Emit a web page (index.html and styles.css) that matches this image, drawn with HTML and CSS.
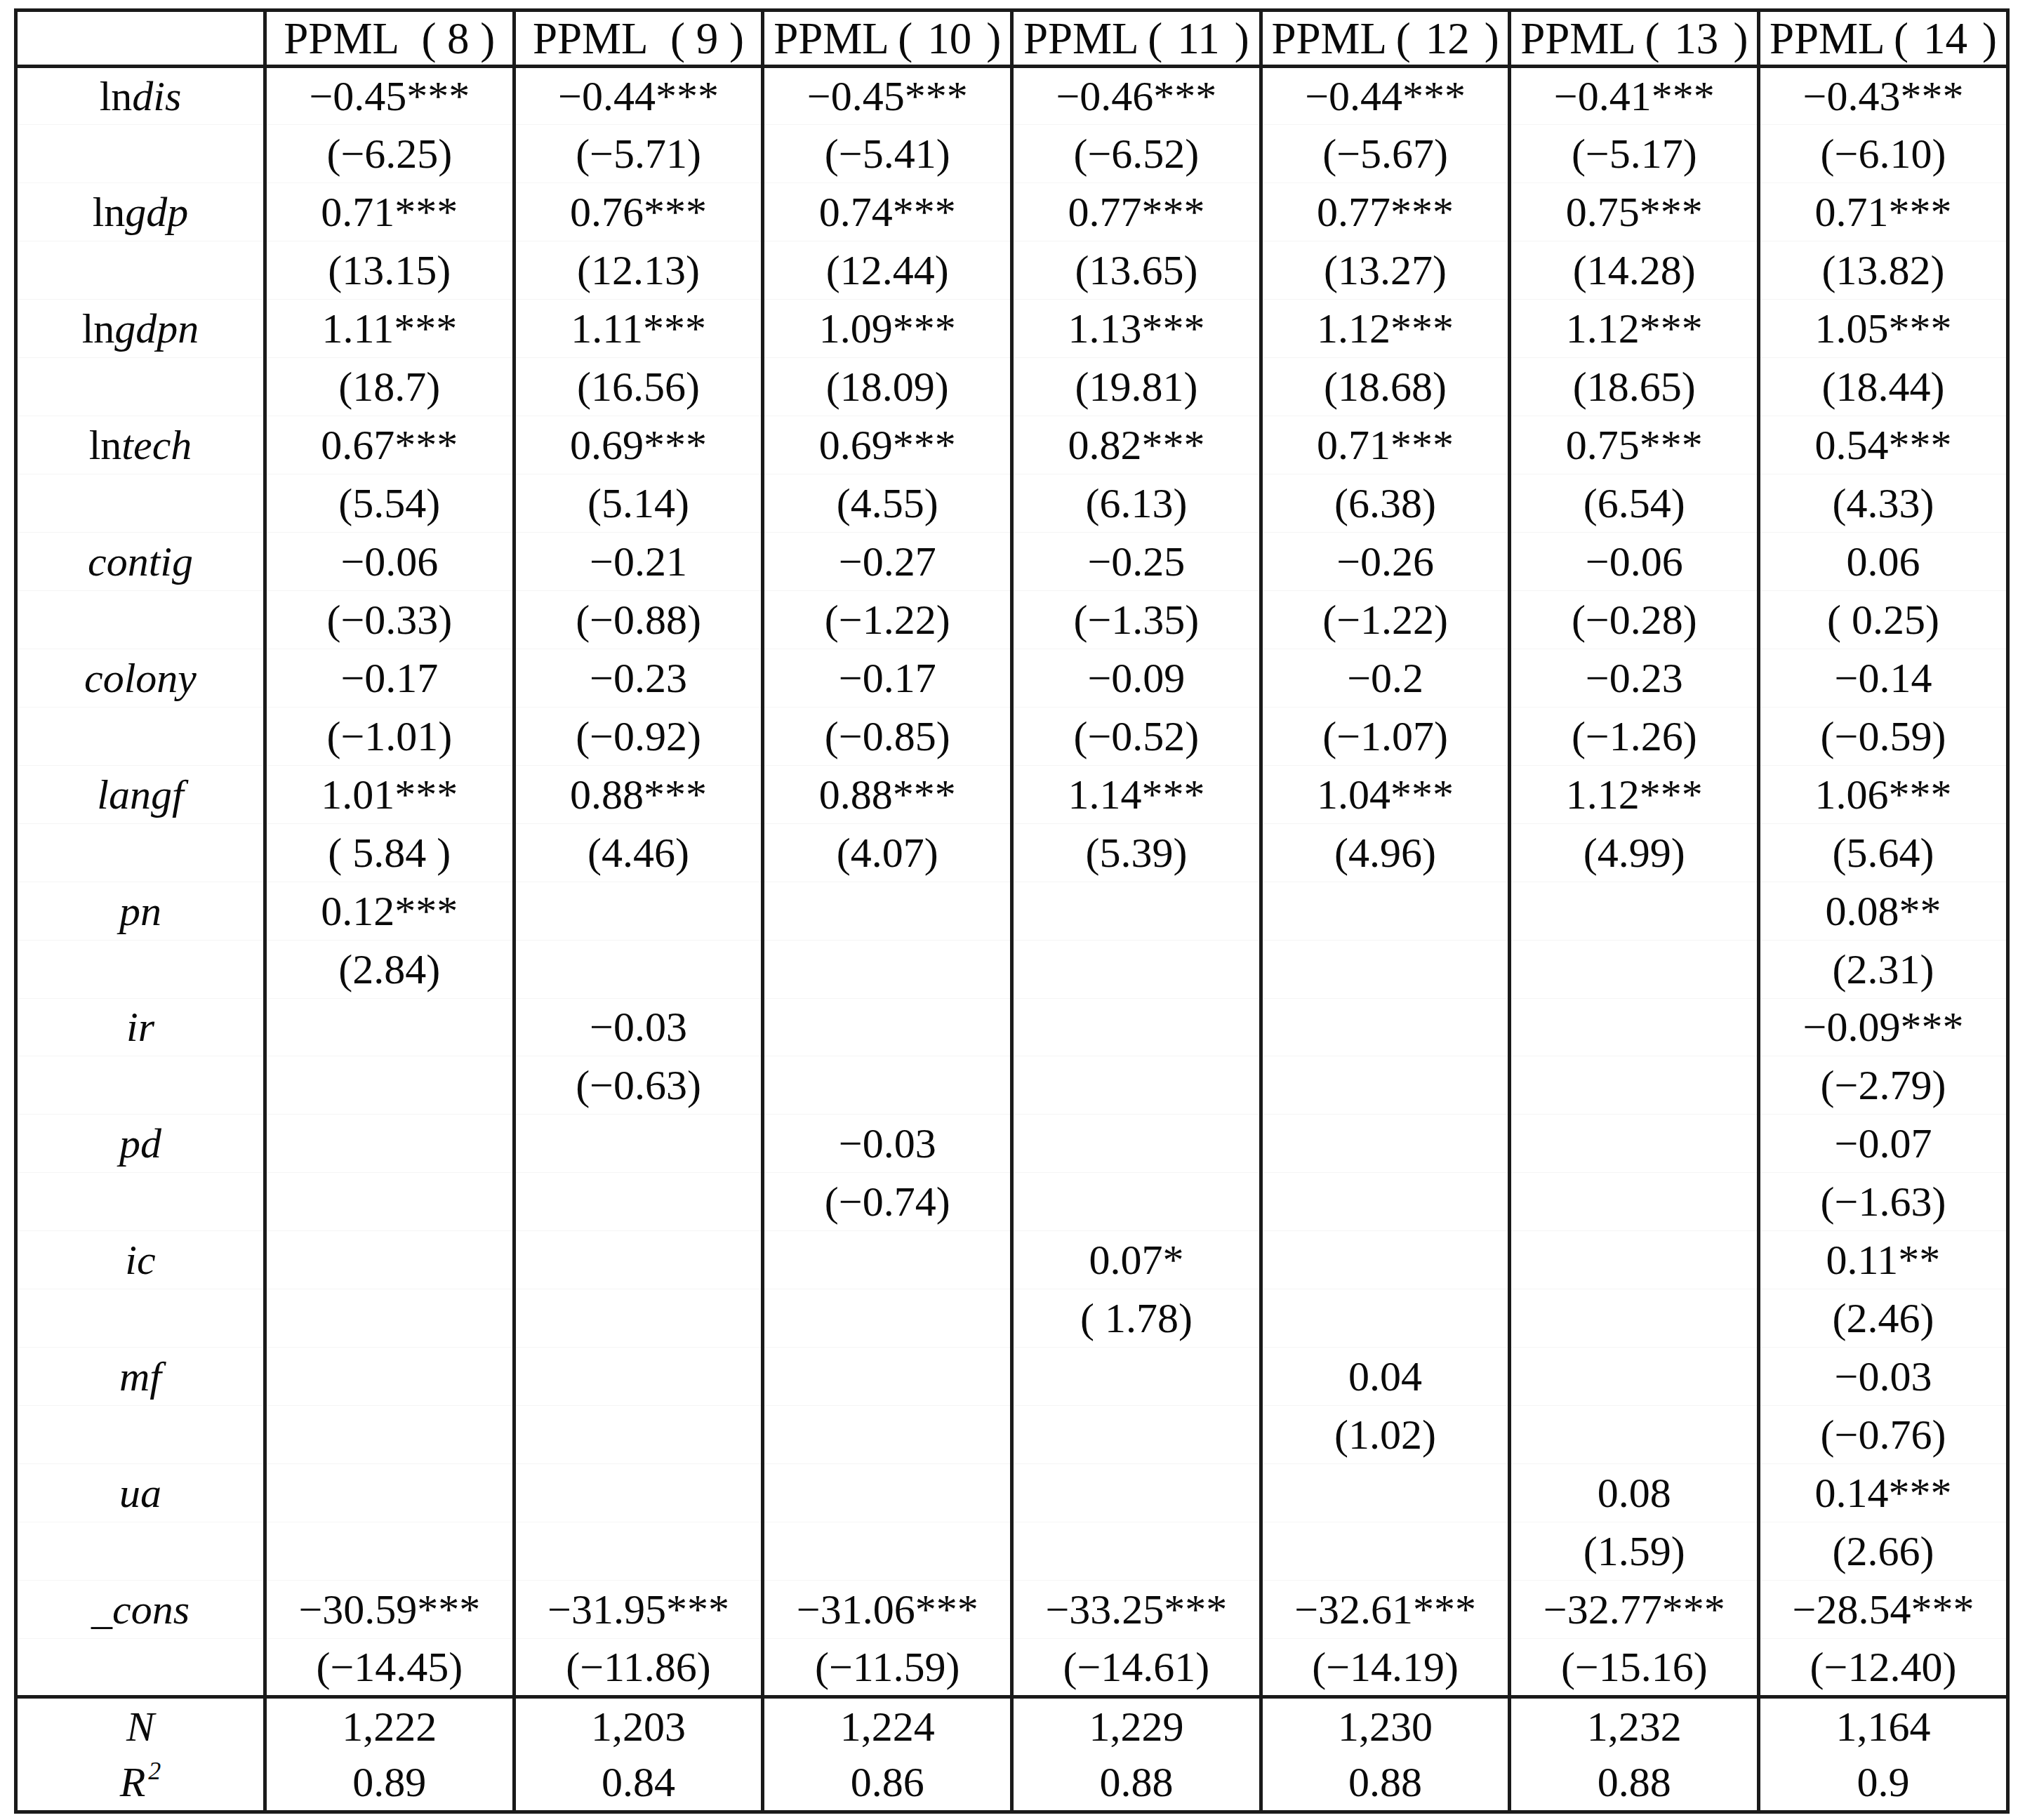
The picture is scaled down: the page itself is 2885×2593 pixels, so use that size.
FILE: index.html
```html
<!DOCTYPE html>
<html lang="zh">
<head>
<meta charset="utf-8">
<title>PPML</title>
<link rel="stylesheet" href="styles.css">
</head>
<body>
<table class="reg">
<colgroup><col class="c-lab"><col class="c-val"><col class="c-val"><col class="c-val"><col class="c-val"><col class="c-val"><col class="c-val"><col class="c-val"></colgroup>
<thead>
<tr class="head">
<th></th>
<th>PPML&#8194;( 8 )</th>
<th>PPML&#8194;( 9 )</th>
<th>PPML&#8201;(&#8196;10&#8196;)</th>
<th>PPML&#8201;(&#8196;11&#8196;)</th>
<th>PPML&#8201;(&#8196;12&#8196;)</th>
<th>PPML&#8201;(&#8196;13&#8196;)</th>
<th>PPML&#8201;(&#8196;14&#8196;)</th>
</tr>
</thead>
<tbody class="body">
<tr class="coef"><td>ln<i>dis</i></td><td>−0.45***</td><td>−0.44***</td><td>−0.45***</td><td>−0.46***</td><td>−0.44***</td><td>−0.41***</td><td>−0.43***</td></tr>
<tr class="tst"><td></td><td>(−6.25)</td><td>(−5.71)</td><td>(−5.41)</td><td>(−6.52)</td><td>(−5.67)</td><td>(−5.17)</td><td>(−6.10)</td></tr>
<tr class="coef"><td>ln<i>gdp</i></td><td>0.71***</td><td>0.76***</td><td>0.74***</td><td>0.77***</td><td>0.77***</td><td>0.75***</td><td>0.71***</td></tr>
<tr class="tst"><td></td><td>(13.15)</td><td>(12.13)</td><td>(12.44)</td><td>(13.65)</td><td>(13.27)</td><td>(14.28)</td><td>(13.82)</td></tr>
<tr class="coef"><td>ln<i>gdpn</i></td><td>1.11***</td><td>1.11***</td><td>1.09***</td><td>1.13***</td><td>1.12***</td><td>1.12***</td><td>1.05***</td></tr>
<tr class="tst"><td></td><td>(18.7)</td><td>(16.56)</td><td>(18.09)</td><td>(19.81)</td><td>(18.68)</td><td>(18.65)</td><td>(18.44)</td></tr>
<tr class="coef"><td>ln<i>tech</i></td><td>0.67***</td><td>0.69***</td><td>0.69***</td><td>0.82***</td><td>0.71***</td><td>0.75***</td><td>0.54***</td></tr>
<tr class="tst"><td></td><td>(5.54)</td><td>(5.14)</td><td>(4.55)</td><td>(6.13)</td><td>(6.38)</td><td>(6.54)</td><td>(4.33)</td></tr>
<tr class="coef"><td><i>contig</i></td><td>−0.06</td><td>−0.21</td><td>−0.27</td><td>−0.25</td><td>−0.26</td><td>−0.06</td><td>0.06</td></tr>
<tr class="tst"><td></td><td>(−0.33)</td><td>(−0.88)</td><td>(−1.22)</td><td>(−1.35)</td><td>(−1.22)</td><td>(−0.28)</td><td>( 0.25)</td></tr>
<tr class="coef"><td><i>colony</i></td><td>−0.17</td><td>−0.23</td><td>−0.17</td><td>−0.09</td><td>−0.2</td><td>−0.23</td><td>−0.14</td></tr>
<tr class="tst"><td></td><td>(−1.01)</td><td>(−0.92)</td><td>(−0.85)</td><td>(−0.52)</td><td>(−1.07)</td><td>(−1.26)</td><td>(−0.59)</td></tr>
<tr class="coef"><td><i>langf</i></td><td>1.01***</td><td>0.88***</td><td>0.88***</td><td>1.14***</td><td>1.04***</td><td>1.12***</td><td>1.06***</td></tr>
<tr class="tst"><td></td><td>( 5.84 )</td><td>(4.46)</td><td>(4.07)</td><td>(5.39)</td><td>(4.96)</td><td>(4.99)</td><td>(5.64)</td></tr>
<tr class="coef"><td><i>pn</i></td><td>0.12***</td><td></td><td></td><td></td><td></td><td></td><td>0.08**</td></tr>
<tr class="tst"><td></td><td>(2.84)</td><td></td><td></td><td></td><td></td><td></td><td>(2.31)</td></tr>
<tr class="coef"><td><i>ir</i></td><td></td><td>−0.03</td><td></td><td></td><td></td><td></td><td>−0.09***</td></tr>
<tr class="tst"><td></td><td></td><td>(−0.63)</td><td></td><td></td><td></td><td></td><td>(−2.79)</td></tr>
<tr class="coef"><td><i>pd</i></td><td></td><td></td><td>−0.03</td><td></td><td></td><td></td><td>−0.07</td></tr>
<tr class="tst"><td></td><td></td><td></td><td>(−0.74)</td><td></td><td></td><td></td><td>(−1.63)</td></tr>
<tr class="coef"><td><i>ic</i></td><td></td><td></td><td></td><td>0.07*</td><td></td><td></td><td>0.11**</td></tr>
<tr class="tst"><td></td><td></td><td></td><td></td><td>( 1.78)</td><td></td><td></td><td>(2.46)</td></tr>
<tr class="coef"><td><i>mf</i></td><td></td><td></td><td></td><td></td><td>0.04</td><td></td><td>−0.03</td></tr>
<tr class="tst"><td></td><td></td><td></td><td></td><td></td><td>(1.02)</td><td></td><td>(−0.76)</td></tr>
<tr class="coef"><td><i>ua</i></td><td></td><td></td><td></td><td></td><td></td><td>0.08</td><td>0.14***</td></tr>
<tr class="tst"><td></td><td></td><td></td><td></td><td></td><td></td><td>(1.59)</td><td>(2.66)</td></tr>
<tr class="coef"><td><i>_cons</i></td><td>−30.59***</td><td>−31.95***</td><td>−31.06***</td><td>−33.25***</td><td>−32.61***</td><td>−32.77***</td><td>−28.54***</td></tr>
<tr class="tst"><td></td><td>(−14.45)</td><td>(−11.86)</td><td>(−11.59)</td><td>(−14.61)</td><td>(−14.19)</td><td>(−15.16)</td><td>(−12.40)</td></tr>
</tbody>
<tfoot class="foot">
<tr class="stat"><td><i>N</i></td><td>1,222</td><td>1,203</td><td>1,224</td><td>1,229</td><td>1,230</td><td>1,232</td><td>1,164</td></tr>
<tr class="stat"><td><i>R</i><sup class="sq">2</sup></td><td>0.89</td><td>0.84</td><td>0.86</td><td>0.88</td><td>0.88</td><td>0.88</td><td>0.9</td></tr>
</tfoot>
</table>
</body>
</html>
```
FILE: styles.css
```css
html, body {
  margin: 0;
  padding: 0;
  background: #ffffff;
}
body {
  padding: 12px 0 0 20px;
  font-family: "Liberation Serif", "Times New Roman", serif;
  color: #0a0a0a;
}
.reg {
  border-collapse: collapse;
  table-layout: fixed;
  width: 2838px;
  border: 5px solid #1a1a1a;
}
.c-lab { width: 355px; }
.c-val { width: 354.7px; }
.reg th,
.reg td {
  padding: 0;
  text-align: center;
  vertical-align: middle;
  white-space: pre;
  line-height: 1;
  border-left: 5px solid #1a1a1a;
  border-right: 5px solid #1a1a1a;
}
.head th {
  height: 73px;
  font-weight: normal;
  font-size: 63px;
  border-bottom: 5px solid #1a1a1a;
  padding-top: 2px;
}
.body td {
  height: 81.97px;
  font-size: 60px;
  border-bottom: 1px solid #f5f5f5;
}
.body tr:first-child td {
  height: 79.97px;
}
.body tr:last-child td {
  height: 79.97px;
  border-bottom: 5px solid #1a1a1a;
}
.foot td {
  font-size: 60px;
}
.foot tr:first-child td {
  height: 79px;
}
.foot tr:last-child td {
  height: 80px;
  border-bottom: 5px solid #1a1a1a;
}
.reg i {
  font-style: italic;
}
.sq {
  font-size: 36px;
  font-style: italic;
  vertical-align: 24px;
  line-height: 0;
  margin-left: 4px;
}
```
